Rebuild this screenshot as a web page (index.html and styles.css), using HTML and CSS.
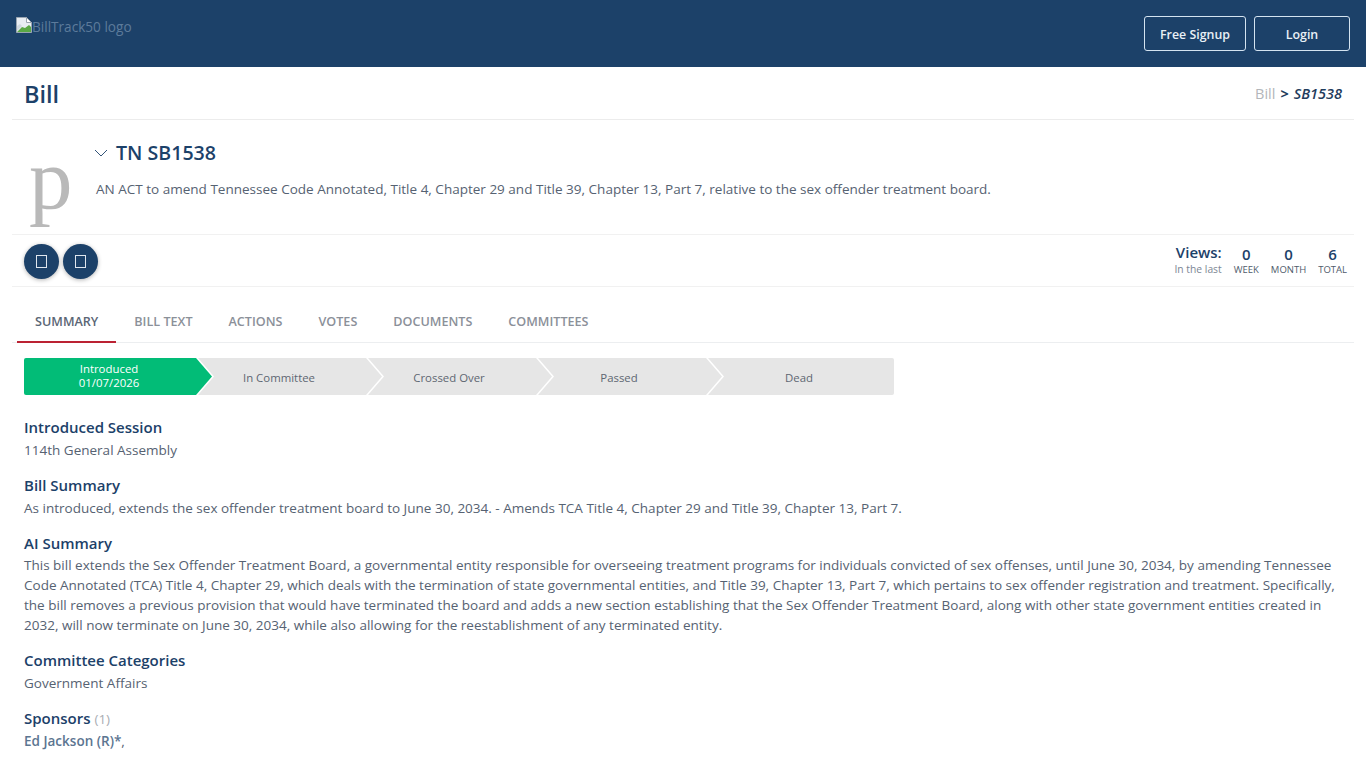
FILE: index.html
```html
<!DOCTYPE html>
<html lang="en">
<head>
  <meta charset="UTF-8">
  <meta name="viewport" content="width=device-width, initial-scale=1.0">
  <title>TN SB1538 - BillTrack50</title>
  <link rel="stylesheet" href="styles.css">
</head>
<body>
  <header class="topbar">
    <div class="logo">
      <svg class="broken-img" width="16" height="16" viewBox="0 0 16 16">
        <path d="M0.5 0.5H10.5L15.5 5.5V15.5H0.5Z" fill="#e8edf2" stroke="#9aa5b1"/>
        <path d="M10.5 0.5V5.5H15.5Z" fill="#fff" stroke="#9aa5b1"/>
        <path d="M1 15L6 10L9 11L13 8L15 10V15Z" fill="#5aa845"/>
        <path d="M1 9L4 7L6 9L1 14Z" fill="#cfd8df"/>
      </svg>
      <span class="logo-alt">BillTrack50 logo</span>
    </div>
    <nav class="topbar-btns">
      <a href="#" class="btn-outline btn-signup">Free Signup</a>
      <a href="#" class="btn-outline btn-login">Login</a>
    </nav>
  </header>

  <div class="page">
    <div class="title-bar">
      <h1>Bill</h1>
      <div class="crumbs"><span class="crumb-root">Bill</span><b>&gt;</b><em>SB1538</em></div>
    </div>

    <section class="bill-head">
      <div class="avatar">p</div>
      <div class="bill-head-text">
        <h2>
          <svg class="chevron" width="14" height="8" viewBox="0 0 14 8"><path d="M1 1L7 7L13 1" fill="none" stroke="#1c4169" stroke-width="0.9"/></svg>
          TN SB1538
        </h2>
        <p>AN ACT to amend Tennessee Code Annotated, Title 4, Chapter 29 and Title 39, Chapter 13, Part 7, relative to the sex offender treatment board.</p>
      </div>
    </section>

    <section class="action-row">
      <div class="round-btns">
        <button class="round-btn"><span class="tofu"></span></button>
        <button class="round-btn"><span class="tofu"></span></button>
      </div>
      <div class="views">
        <div class="views-label"><strong>Views:</strong><span>In the last</span></div>
        <div class="views-col"><strong>0</strong><span>WEEK</span></div>
        <div class="views-col"><strong>0</strong><span>MONTH</span></div>
        <div class="views-col"><strong>6</strong><span>TOTAL</span></div>
      </div>
    </section>

    <ul class="tabs">
      <li class="active">SUMMARY</li>
      <li>BILL TEXT</li>
      <li>ACTIONS</li>
      <li>VOTES</li>
      <li>DOCUMENTS</li>
      <li>COMMITTEES</li>
    </ul>

    <div class="content">
      <div class="steps">
        <div class="step step-done">Introduced<br>01/07/2026</div>
        <div class="step">In Committee</div>
        <div class="step">Crossed Over</div>
        <div class="step">Passed</div>
        <div class="step step-last">Dead</div>
      </div>

      <div class="block">
        <h3>Introduced Session</h3>
        <p>114th General Assembly</p>
      </div>
      <div class="block">
        <h3>Bill Summary</h3>
        <p>As introduced, extends the sex offender treatment board to June 30, 2034. - Amends TCA Title 4, Chapter 29 and Title 39, Chapter 13, Part 7.</p>
      </div>
      <div class="block block-tight">
        <h3>AI Summary</h3>
        <p>This bill extends the Sex Offender Treatment Board, a governmental entity responsible for overseeing treatment programs for individuals convicted of sex offenses, until June 30, 2034, by amending Tennessee Code Annotated (TCA) Title 4, Chapter 29, which deals with the termination of state governmental entities, and Title 39, Chapter 13, Part 7, which pertains to sex offender registration and treatment. Specifically, the bill removes a previous provision that would have terminated the board and adds a new section establishing that the Sex Offender Treatment Board, along with other state government entities created in 2032, will now terminate on June 30, 2034, while also allowing for the reestablishment of any terminated entity.</p>
      </div>
      <div class="block">
        <h3>Committee Categories</h3>
        <p>Government Affairs</p>
      </div>
      <div class="block block-tight">
        <h3>Sponsors <span class="count">(1)</span></h3>
        <p><a href="#" class="sponsor">Ed Jackson (R)*</a>,</p>
      </div>
    </div>
  </div>
</body>
</html>
```

FILE: styles.css
```css
* {
  margin: 0;
  padding: 0;
  box-sizing: border-box;
}

:root {
  --navy: #1c4169;
  --text: #566272;
}

body {
  font-family: 'Open Sans', 'Noto Sans', sans-serif;
  font-size: 13.52px;
  color: var(--text);
  background: #fff;
  overflow-x: hidden;
}

/* Top bar */
.topbar {
  height: 67px;
  background: var(--navy);
  display: flex;
  justify-content: space-between;
  padding: 16px 16px 0;
}

.logo {
  display: flex;
  align-items: flex-start;
  color: #5d7b9b;
  font-size: 13.6px;
  line-height: 22px;
}

.broken-img {
  margin-top: 1px;
}

.topbar-btns {
  display: flex;
  gap: 8px;
  height: 35px;
}

.btn-outline {
  display: flex;
  align-items: center;
  justify-content: center;
  padding-top: 1px;
  border: 1px solid #d4e3f0;
  border-radius: 3px;
  color: #e9f0f6;
  font-size: 12.4px;
  font-weight: 600;
  text-decoration: none;
}

.btn-signup { width: 102px; }
.btn-login { width: 96px; }

/* Page */
.page {
  margin: 0 12px;
}

.title-bar {
  height: 53px;
  display: flex;
  justify-content: space-between;
  align-items: center;
  padding: 0 12px;
  border-bottom: 1px solid #ececec;
}

.title-bar h1 {
  padding-top: 2px;
  font-size: 23.5px;
  font-weight: 600;
  color: var(--navy);
}

.crumbs {
  display: flex;
  gap: 5px;
  font-size: 14.5px;
  color: #1f3c5c;
}

.crumb-root {
  color: #b3b6ba;
}

.crumbs em {
  font-weight: 600;
}

.bill-head {
  height: 115px;
  display: flex;
  border-bottom: 1px solid #f1f1f1;
  padding-left: 12px;
}

.avatar {
  width: 58px;
  margin-left: 5px;
  font-family: 'Liberation Serif', serif;
  font-size: 87px;
  line-height: 87px;
  color: #b9b9b9;
  padding-top: 15px;
}

.bill-head-text {
  padding-top: 19px;
  margin-left: 7px;
}

.bill-head-text h2 {
  display: flex;
  align-items: center;
  gap: 8px;
  font-size: 19.6px;
  font-weight: 600;
  line-height: 27px;
  color: var(--navy);
}

.bill-head-text p {
  margin-top: 13px;
  margin-left: 2px;
  line-height: 20px;
}

.action-row {
  height: 52px;
  display: flex;
  justify-content: space-between;
  border-bottom: 1px solid #f1f1f1;
  padding: 9px 7px 0 12px;
}

.round-btns {
  display: flex;
  gap: 4px;
  height: 35px;
}

.round-btn {
  width: 35px;
  height: 35px;
  border: none;
  border-radius: 50%;
  background: var(--navy);
  box-shadow: 0 1px 4px rgba(0, 0, 0, 0.3);
  display: flex;
  align-items: center;
  justify-content: center;
}

.tofu {
  width: 11px;
  height: 13px;
  border: 1px solid #dfe6ee;
}

.views {
  display: flex;
  align-items: flex-start;
  margin-top: -2px;
  color: var(--navy);
}

.views-label,
.views-col {
  display: flex;
  flex-direction: column;
}

.views-label {
  align-items: flex-end;
}

.views-label strong {
  font-size: 15px;
  font-weight: 600;
  line-height: 21px;
}

.views-label span {
  font-size: 10.3px;
  line-height: 13px;
  color: #7c8694;
}

.views-col {
  align-items: center;
  margin-left: 12px;
  margin-top: 2px;
}

.views-col strong {
  font-size: 15px;
  font-weight: 600;
  line-height: 20px;
}

.views-col span {
  font-size: 9.5px;
  line-height: 12px;
  color: #4f5b6b;
}

/* Tabs */
.tabs {
  list-style: none;
  display: flex;
  height: 56px;
  padding: 14px 0 0 5px;
  border-bottom: 1px solid #eceef0;
}

.tabs li {
  padding: 0 18px;
  height: 42px;
  line-height: 41px;
  font-size: 12.6px;
  font-weight: 600;
  color: #8b9099;
}

.tabs li.active {
  color: #5b6675;
  border-bottom: 2px solid #bb2233;
}

/* Status arrows */
.content {
  padding: 15px 12px 0;
}

.steps {
  display: flex;
  margin-bottom: 21px;
}

.step {
  width: 184px;
  height: 37px;
  margin-left: -14px;
  padding: 2px 22px 0 0;
  background: #e6e6e6;
  clip-path: polygon(0 0, calc(100% - 16px) 0, 100% 50%, calc(100% - 16px) 100%, 0 100%, 16px 50%);
  font-size: 11.4px;
  line-height: 14px;
  color: #5e6672;
  display: flex;
  align-items: center;
  justify-content: center;
  text-align: center;
}

.step-done {
  width: 188px;
  margin-left: 0;
  padding: 0 18px 2px 0;
  background: #02bc77;
  color: #fff;
  border-radius: 2px 0 0 2px;
  clip-path: polygon(0 0, calc(100% - 16px) 0, 100% 50%, calc(100% - 16px) 100%, 0 100%);
}

.step-last {
  width: 186px;
  padding-right: 4px;
  border-radius: 0 2px 2px 0;
  clip-path: polygon(0 0, 100% 0, 100% 100%, 0 100%, 16px 50%);
}

/* Text blocks */
.block {
  margin-bottom: 14px;
}

.block h3 {
  font-size: 15px;
  font-weight: 600;
  line-height: 23px;
  color: var(--navy);
}

.block p {
  padding-top: 1px;
  line-height: 20px;
}

.block-tight p {
  padding-top: 0;
}

.count {
  font-size: 13.5px;
  font-weight: 400;
  color: #a9adb3;
}

.sponsor {
  color: #5c7591;
  font-weight: 600;
  text-decoration: none;
}
```
